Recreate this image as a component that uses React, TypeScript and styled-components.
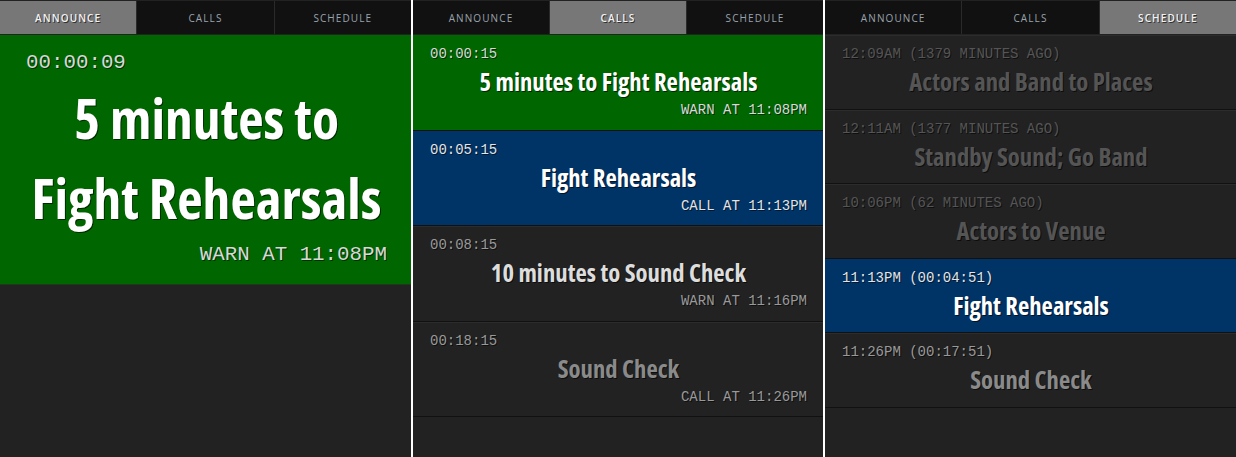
import React from "react";
import styled, { createGlobalStyle } from "styled-components";

const Global = createGlobalStyle`
  html, body { margin: 0; padding: 0; background: #222; }
  body { width: 1236px; height: 457px; overflow: hidden; font-family: "Open Sans", "DejaVu Sans", sans-serif; }
`;

const Screen = styled.div`
  display: flex;
  width: 1236px;
  height: 457px;
  background: #fff;
  gap: 2px;
`;

const Panel = styled.div<{ $w: number }>`
  width: ${(p) => p.$w}px;
  flex: none;
  background: #222;
  display: flex;
  flex-direction: column;
`;

const Tabs = styled.div`
  display: flex;
  height: 33px;
  background: #111;
  border-top: 1px solid #222;
  border-bottom: 1px solid #222;
`;

const Tab = styled.div<{ $active?: boolean }>`
  flex: 1;
  display: flex;
  align-items: center;
  justify-content: center;
  font-family: "Open Sans", sans-serif;
  font-size: 10px;
  letter-spacing: 1.1px;
  text-transform: uppercase;
  color: ${(p) => (p.$active ? "#f2f2f2" : "#9aa3ad")};
  font-weight: ${(p) => (p.$active ? 600 : 400)};
  background: ${(p) => (p.$active ? "#777" : "transparent")};
  text-shadow: ${(p) => (p.$active ? "1px 1px 0 rgba(0,0,0,0.6)" : "none")};
  border-left: 1px solid #2a2a2a;
  &:first-child { border-left: none; }
`;

const Mono = styled.div<{ $size: number; $color: string; $lh: number; $align?: string }>`
  font-family: "Liberation Mono", "DejaVu Sans Mono", monospace;
  font-size: ${(p) => p.$size}px;
  line-height: ${(p) => p.$lh}px;
  color: ${(p) => p.$color};
  text-align: ${(p) => p.$align || "left"};
  text-shadow: 1px 1px 0 rgba(0, 0, 0, 0.55);
  white-space: nowrap;
`;

const Title = styled.div<{ $size: number; $lh: number; $color: string }>`
  font-family: "Open Sans", sans-serif;
  font-stretch: 75%;
  font-weight: 700;
  font-size: ${(p) => p.$size}px;
  line-height: ${(p) => p.$lh}px;
  color: ${(p) => p.$color};
  text-align: center;
  text-shadow: 1px 1px 0 rgba(0, 0, 0, 0.6);
`;

const Announce = styled.div`
  background: #006600;
  padding: 14px 24px 15px 26px;
  border-bottom: 1px solid #1a3a1a;
`;

const BigTitle = styled(Title)`
  margin-top: 1px;
  margin-bottom: 3px;
`;

const Row = styled.div<{ $bg: string; $pb: number }>`
  background: ${(p) => p.$bg};
  padding: 8px 16px ${(p) => p.$pb}px 17px;
  border-bottom: 1px solid #111;
  border-top: 1px solid ${(p) => (p.$bg === "#222" ? "#2c2c2c" : p.$bg)};
`;

type Call = { t: string; title: string; foot: string; bg: string; title_c: string; mono_c: string };

const calls: Call[] = [
  { t: "00:00:15", title: "5 minutes to Fight Rehearsals", foot: "WARN AT 11:08PM", bg: "#006600", title_c: "#ffffff", mono_c: "#d8d8d8" },
  { t: "00:05:15", title: "Fight Rehearsals", foot: "CALL AT 11:13PM", bg: "#003366", title_c: "#ffffff", mono_c: "#e4e4e4" },
  { t: "00:08:15", title: "10 minutes to Sound Check", foot: "WARN AT 11:16PM", bg: "#222", title_c: "#dddddd", mono_c: "#999999" },
  { t: "00:18:15", title: "Sound Check", foot: "CALL AT 11:26PM", bg: "#222", title_c: "#8a8a8a", mono_c: "#999999" },
];

type Sched = { t: string; title: string; bg: string; title_c: string; mono_c: string };

const sched: Sched[] = [
  { t: "12:09AM (1379 MINUTES AGO)", title: "Actors and Band to Places", bg: "#222", title_c: "#555", mono_c: "#555" },
  { t: "12:11AM (1377 MINUTES AGO)", title: "Standby Sound; Go Band", bg: "#222", title_c: "#555", mono_c: "#555" },
  { t: "10:06PM (62 MINUTES AGO)", title: "Actors to Venue", bg: "#222", title_c: "#555", mono_c: "#555" },
  { t: "11:13PM (00:04:51)", title: "Fight Rehearsals", bg: "#003366", title_c: "#ffffff", mono_c: "#e4e4e4" },
  { t: "11:26PM (00:17:51)", title: "Sound Check", bg: "#222", title_c: "#8a8a8a", mono_c: "#999" },
];

const TabBar = ({ active }: { active: number }) => (
  <Tabs>
    {["Announce", "Calls", "Schedule"].map((n, i) => (
      <Tab key={n} $active={i === active}>{n}</Tab>
    ))}
  </Tabs>
);

export default function App() {
  return (
    <>
      <Global />
      <Screen>
        <Panel $w={411}>
          <TabBar active={0} />
          <Announce>
            <Mono $size={20.8} $lh={28} $color="#d8d8d8">00:00:09</Mono>
            <BigTitle $size={55.5} $lh={80} $color="#fff">5 minutes to<br />Fight Rehearsals</BigTitle>
            <Mono $size={20.8} $lh={28} $color="#d8d8d8" $align="right">WARN AT 11:08PM</Mono>
          </Announce>
        </Panel>
        <Panel $w={410}>
          <TabBar active={1} />
          {calls.map((c) => (
            <Row key={c.t} $bg={c.bg} $pb={9.5}>
              <Mono $size={14} $lh={20} $color={c.mono_c}>{c.t}</Mono>
              <Title $size={24.7} $lh={36} $color={c.title_c}>{c.title}</Title>
              <Mono $size={14} $lh={20} $color={c.mono_c} $align="right">{c.foot}</Mono>
            </Row>
          ))}
        </Panel>
        <Panel $w={411}>
          <TabBar active={2} />
          {sched.map((s) => (
            <Row key={s.t} $bg={s.bg} $pb={8.5}>
              <Mono $size={14} $lh={20} $color={s.mono_c}>{s.t}</Mono>
              <Title $size={24.7} $lh={36} $color={s.title_c}>{s.title}</Title>
            </Row>
          ))}
        </Panel>
      </Screen>
    </>
  );
}
